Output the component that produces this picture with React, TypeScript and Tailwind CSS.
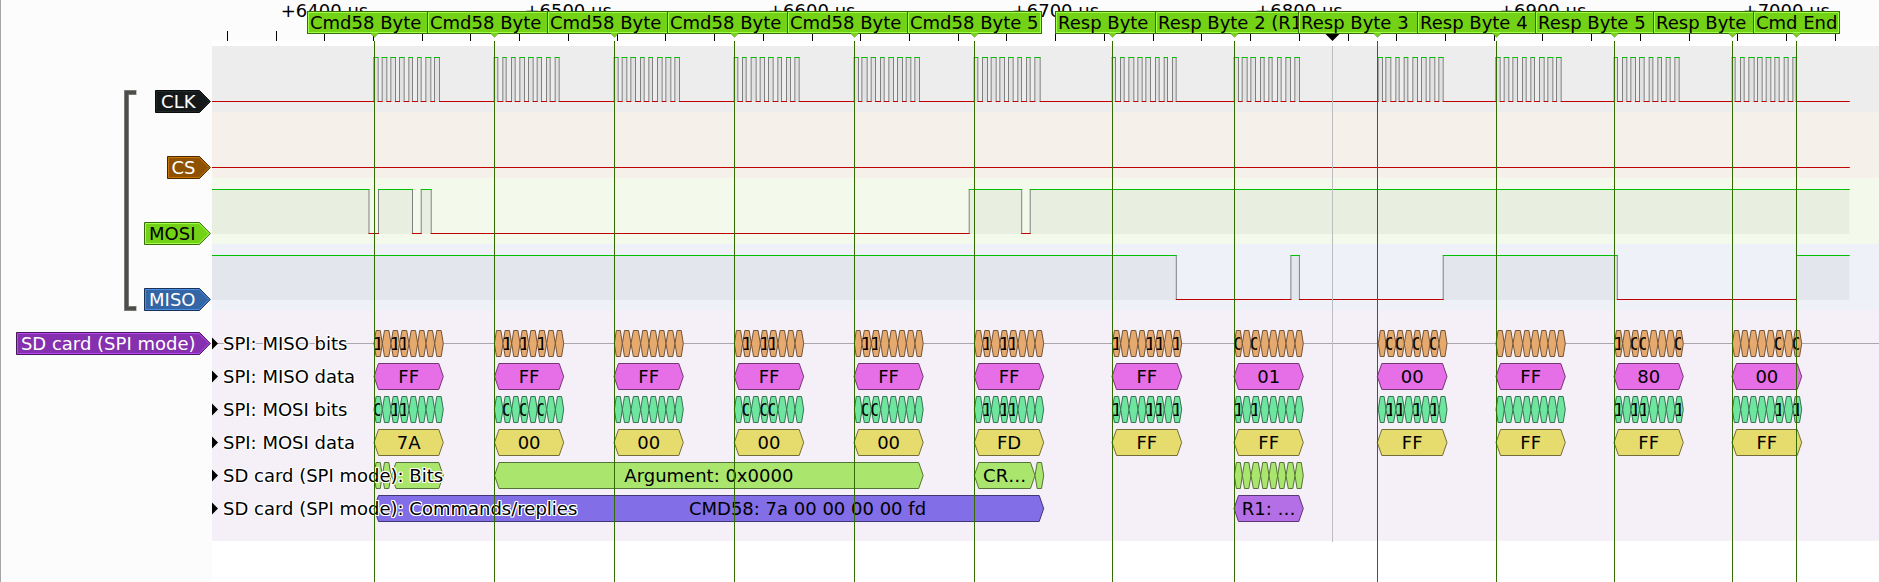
import React from "react";

const FONT = '"DejaVu Sans", Verdana, sans-serif';
const LEFT = 212;
const WIDTH = 1667;
const END = 1849.3;

/* ---------- captured data ---------- */

type ByteFrame = {
  origin: number;
  pulses: number[];
  start: number;
  end: number;
  miso: string;
  mosi: string;
  misoBits: string;
  mosiBits: string;
};

// Pulse edges are stored in thirds of a pixel, relative to the origin.
const BYTES: ByteFrame[] = [
  { origin: 0, pulses: [1120, 1136, 1145, 1162, 1171, 1188, 1197, 1214, 1225, 1239, 1251, 1265, 1276, 1294, 1302, 1320], start: 374, end: 443.3, miso: "FF", mosi: "7A", misoBits: "1 11    ", mosiBits: "0 11    " },
  { origin: 360, pulses: [401, 415, 427, 440, 453, 467, 478, 495, 504, 521, 530, 546, 558, 572, 584, 599], start: 494.5, end: 563.7, miso: "FF", mosi: "00", misoBits: " 1 1 1  ", mosiBits: " 0 0 0  " },
  { origin: 360, pulses: [761, 776, 785, 802, 811, 828, 840, 854, 865, 879, 891, 908, 916, 934, 943, 960], start: 614, end: 683.3, miso: "FF", mosi: "00", misoBits: "        ", mosiBits: "        " },
  { origin: 760, pulses: [-79, -65, -54, -40, -28, -10, -1, 15, 24, 41, 52, 66, 78, 93, 103, 119], start: 734.3, end: 803.7, miso: "FF", mosi: "00", misoBits: " 1 11   ", mosiBits: " 0 00   " },
  { origin: 760, pulses: [281, 297, 304, 323, 332, 348, 360, 374, 385, 402, 411, 429, 437, 454, 463, 480], start: 854, end: 923.2, miso: "FF", mosi: "00", misoBits: " 11     ", mosiBits: " 00     " },
  { origin: 760, pulses: [641, 655, 666, 684, 692, 710, 718, 735, 744, 761, 772, 786, 798, 812, 823, 842], start: 974.3, end: 1043.7, miso: "FF", mosi: "FD", misoBits: " 1 11   ", mosiBits: " 1 11   " },
  { origin: 1040, pulses: [215, 228, 240, 254, 265, 283, 292, 308, 316, 333, 345, 359, 371, 384, 396, 410], start: 1112, end: 1181.7, miso: "FF", mosi: "FF", misoBits: "1   11 1", mosiBits: "1   11 1" },
  { origin: 1040, pulses: [581, 597, 605, 623, 631, 648, 660, 674, 685, 698, 711, 725, 736, 753, 763, 780], start: 1234, end: 1303.3, miso: "01", mosi: "FF", misoBits: "0 0     ", mosiBits: "1 1     " },
  { origin: 1040, pulses: [1013, 1029, 1036, 1054, 1066, 1079, 1091, 1105, 1117, 1134, 1143, 1160, 1168, 1186, 1195, 1211], start: 1377.3, end: 1447, miso: "00", mosi: "FF", misoBits: " 00 0 0 ", mosiBits: " 11 1 1 " },
  { origin: 1440, pulses: [166, 182, 191, 208, 217, 234, 246, 260, 271, 285, 297, 314, 322, 340, 348, 365], start: 1496, end: 1565.3, miso: "FF", mosi: "FF", misoBits: "        ", mosiBits: "        " },
  { origin: 1440, pulses: [521, 534, 546, 562, 571, 588, 597, 614, 626, 640, 652, 666, 677, 692, 703, 719], start: 1614, end: 1683.3, miso: "80", mosi: "FF", misoBits: "1 00   0", mosiBits: "1 11   1" },
  { origin: 1440, pulses: [875, 887, 900, 914, 925, 944, 951, 968, 977, 994, 1003, 1019, 1031, 1046, 1057, 1070], start: 1732, end: 1801.7, miso: "00", mosi: "FF", misoBits: "     0 0", mosiBits: "     1 1" },
];

const CLK_EDGES = BYTES.flatMap((b) =>
  b.pulses.map((p, i) => b.origin + (i % 2 === 0 ? p + 1.5 : p - 1.5) / 3),
);
const MOSI_EDGES = [369, 378.5, 412.5, 421.2, 431.2, 969.2, 1021.7, 1030.2];
const MISO_EDGES = [1176.3, 1290.9, 1299.4, 1443.2, 1617.3, 1796.5];

const CURSORS = [374, 494, 614, 734, 854, 974, 1112, 1234, 1377, 1496, 1614, 1732, 1796];
const HOVER = 1332;

/* ---------- ruler ---------- */

const MARKER_GROUPS = [
  {
    gap: "ml-[95px]",
    flags: [
      { text: "Cmd58 Byte", w: "w-[120px]" },
      { text: "Cmd58 Byte", w: "w-[120px]" },
      { text: "Cmd58 Byte", w: "w-[120px]" },
      { text: "Cmd58 Byte", w: "w-[120px]" },
      { text: "Cmd58 Byte", w: "w-[120px]" },
      { text: "Cmd58 Byte 5", w: "w-[135px]" },
    ],
  },
  {
    gap: "ml-[13px]",
    flags: [
      { text: "Resp Byte", w: "w-[100px]" },
      { text: "Resp Byte 2 (R1", w: "w-[143px]" },
      { text: "Resp Byte 3", w: "w-[119px]" },
      { text: "Resp Byte 4", w: "w-[118px]" },
      { text: "Resp Byte 5", w: "w-[118px]" },
      { text: "Resp Byte", w: "w-[100px]" },
      { text: "Cmd End", w: "w-[87px]" },
    ],
  },
];

function Ruler() {
  const ticks = Array.from({ length: 34 }, (_, k) => Math.round(226.86 + 48.727 * k));
  const labels = Array.from({ length: 7 }, (_, k) => ({
    x: 324.5 + 243.63 * k,
    text: `+${6400 + k * 100} µs`,
  }));
  return (
    <div className="grid h-[41px] bg-[#fcfcfc]">
      <svg className="col-start-1 row-start-1" width={WIDTH} height={41} viewBox={`${LEFT} 0 ${WIDTH} 41`}>
        {ticks.map((x) => (
          <rect key={x} x={x} y={31} width={1} height={10} fill="#000" />
        ))}
        {labels.map((l) => (
          <text key={l.text} x={l.x} y={17} textAnchor="middle" fontSize={18}>
            {l.text}
          </text>
        ))}
      </svg>
      <div className="col-start-1 row-start-1 mt-[11px] flex h-[23px]">
        {MARKER_GROUPS.map((group, g) => (
          <div key={g} className={`flex ${group.gap}`}>
            {group.flags.map((f, i) => (
              <div
                key={i}
                className={`${f.w} h-[23px] shrink-0 overflow-hidden border-y border-l border-[#3a6b0b] bg-[#73d216] pl-[2px] leading-[21px] whitespace-pre ${
                  i === group.flags.length - 1
                    ? "border-r shadow-[inset_0_0_0_1px_#9dff47]"
                    : "shadow-[inset_1px_1px_0_0_#9dff47,inset_0_-1px_0_0_#9dff47]"
                }`}
              >
                {f.text}
              </div>
            ))}
          </div>
        ))}
      </div>
    </div>
  );
}

/* ---------- logic traces ---------- */

type TraceProps = { top: number; edges: number[]; startHigh?: boolean; bg: string };

function Trace({ top, edges, startHigh = false, bg }: TraceProps) {
  const hi = top + 11;
  const lo = top + 55;
  const points = [LEFT - 1, ...edges, END];
  const runs = points.slice(0, -1).map((x, i) => ({
    x1: x,
    x2: points[i + 1],
    high: (i % 2 === 0) === startHigh,
  }));
  return (
    <svg className={`block ${bg}`} width={WIDTH} height={66} viewBox={`${LEFT} ${top} ${WIDTH} 66`}>
      {runs
        .filter((r) => r.high)
        .map((r) => (
          <rect key={r.x1} x={r.x1} y={hi} width={r.x2 - r.x1} height={45} fill="#000" fillOpacity={0.045} />
        ))}
      {edges.map((x) => (
        <line key={x} x1={x} x2={x} y1={hi + 0.5} y2={lo + 0.5} stroke="#808080" />
      ))}
      {runs.map((r) => (
        <line
          key={r.x1}
          x1={r.x1 - 0.5}
          x2={r.x2 + 0.5}
          y1={(r.high ? hi : lo) + 0.5}
          y2={(r.high ? hi : lo) + 0.5}
          stroke={r.high ? "#00c000" : "#c00000"}
        />
      ))}
    </svg>
  );
}

/* ---------- decoder annotations ---------- */

type HexProps = {
  x1: number;
  x2: number;
  cy: number;
  fill: string;
  stroke: string;
  text?: string;
  textX?: number;
};

function Hex({ x1, x2, cy, fill, stroke, text, textX }: HexProps) {
  const w = x2 - x1;
  const s = Math.min(4.5, w / 4);
  const t = cy - 13;
  const b = cy + 13;
  return (
    <>
      <path
        d={`M${x1} ${cy}L${x1 + s} ${t}H${x2 - s}L${x2} ${cy}L${x2 - s} ${b}H${x1 + s}Z`}
        fill={fill}
        stroke={stroke}
      />
      {text && (
        <text x={textX ?? (x1 + x2) / 2} y={cy + 6.5} textAnchor="middle" fontSize={18}>
          {text}
        </text>
      )}
    </>
  );
}

function bitBounds(b: ByteFrame) {
  const starts = b.pulses.filter((_, i) => i % 2 === 0).map((p) => b.origin + (p + 2) / 3);
  return [...starts, b.end];
}

type BitsProps = { id: string; frame: ByteFrame; bits: string; cy: number; fill: string; stroke: string };

function Bits({ id, frame, bits, cy, fill, stroke }: BitsProps) {
  const bounds = bitBounds(frame);
  return (
    <>
      {bits.split("").map((bit, i) => {
        const x = bounds[i];
        const clip = `${id}-${i}`;
        return (
          <g key={i}>
            <Hex x1={x} x2={bounds[i + 1]} cy={cy} fill={fill} stroke={stroke} />
            {bit !== " " && (
              <>
                <clipPath id={clip}>
                  <rect x={x + 0.2} y={cy - 12} width={6} height={24} />
                </clipPath>
                <text x={x - 1.2} y={cy + 6.5} fontSize={18} clipPath={`url(#${clip})`}>
                  {bit}
                </text>
              </>
            )}
          </g>
        );
      })}
    </>
  );
}

const HALO =
  "[text-shadow:1px_0_#fff,-1px_0_#fff,0_1px_#fff,0_-1px_#fff,1px_1px_#fff,-1px_1px_#fff,1px_-1px_#fff,-1px_-1px_#fff]";

function DecoderRow({ label, cy, children }: { label: string; cy: number; children: React.ReactNode }) {
  return (
    <div className="grid h-[33px]">
      <svg
        className="col-start-1 row-start-1"
        width={WIDTH}
        height={33}
        viewBox={`${LEFT} ${cy - 16.5} ${WIDTH} 33`}
      >
        {children}
        <path d={`M${LEFT} ${cy - 6}L${LEFT + 6} ${cy}L${LEFT} ${cy + 6}Z`} fill="#000" />
      </svg>
      <span className={`z-[1] col-start-1 row-start-1 self-center pl-[11px] leading-[33px] whitespace-pre ${HALO}`}>
        {label}
      </span>
    </div>
  );
}

const ORANGE = { fill: "#e6a96e", stroke: "#735437" };
const PINK = { fill: "#e66ee6", stroke: "#733773" };
const MINT = { fill: "#6ee6a0", stroke: "#377350" };
const YELLOW = { fill: "#e6dc6e", stroke: "#736e37" };
const LIME = { fill: "#aae66e", stroke: "#557337" };
const INDIGO = { fill: "#826ee6", stroke: "#413773" };
const VIOLET = { fill: "#b46ee6", stroke: "#5a3773" };

function Decoder() {
  const first = bitBounds(BYTES[0]);
  return (
    <div className="flex h-[231px] flex-col bg-[#f5eff7] pt-[17px]">
      <DecoderRow label="SPI: MISO bits" cy={343.5}>
        <rect x={LEFT} y={343} width={WIDTH} height={1} fill="#aca7ad" />
        {BYTES.map((b, i) => (
          <Bits key={i} id={`miso-${i}`} frame={b} bits={b.misoBits} cy={343.5} {...ORANGE} />
        ))}
      </DecoderRow>
      <DecoderRow label="SPI: MISO data" cy={376.5}>
        {BYTES.map((b, i) => (
          <Hex key={i} x1={b.start} x2={b.end} cy={376.5} text={b.miso} {...PINK} />
        ))}
      </DecoderRow>
      <DecoderRow label="SPI: MOSI bits" cy={409.5}>
        {BYTES.map((b, i) => (
          <Bits key={i} id={`mosi-${i}`} frame={b} bits={b.mosiBits} cy={409.5} {...MINT} />
        ))}
      </DecoderRow>
      <DecoderRow label="SPI: MOSI data" cy={442.5}>
        {BYTES.map((b, i) => (
          <Hex key={i} x1={b.start} x2={b.end} cy={442.5} text={b.mosi} {...YELLOW} />
        ))}
      </DecoderRow>
      <DecoderRow label="SD card (SPI mode): Bits" cy={475.5}>
        <Hex x1={first[0]} x2={first[1]} cy={475.5} {...LIME} />
        <Hex x1={first[1]} x2={first[2]} cy={475.5} {...LIME} />
        <Hex x1={391.5} x2={443.3} cy={475.5} {...LIME} />
        <Hex x1={494.5} x2={923.2} cy={475.5} text="Argument: 0x0000" {...LIME} />
        <Hex x1={974.3} x2={1035} cy={475.5} text="CR…" {...LIME} />
        <Hex x1={1035} x2={1043.7} cy={475.5} {...LIME} />
        <Bits id="r1" frame={BYTES[7]} bits="        " cy={475.5} {...LIME} />
      </DecoderRow>
      <DecoderRow label="SD card (SPI mode): Commands/replies" cy={508.5}>
        <Hex x1={374} x2={1043.7} cy={508.5} text="CMD58: 7a 00 00 00 00 fd" textX={807.5} {...INDIGO} />
        <Hex x1={1234} x2={1303.3} cy={508.5} text="R1: …" {...VIOLET} />
      </DecoderRow>
    </div>
  );
}

/* ---------- channel tags ---------- */

type TagProps = { label: string; w: number; fill: string; dark: string; light: string; color: string };

function Tag({ label, w, fill, dark, light, color }: TagProps) {
  const body = w - 11.5;
  return (
    <div className="grid h-[23px] justify-end pr-px">
      <svg className="col-start-1 row-start-1 justify-self-end" width={w} height={23} viewBox={`0 0 ${w} 23`}>
        <path d={`M.5 .5H${body}L${w - 0.7} 11.5L${body} 22.5H.5Z`} fill={fill} stroke={dark} />
        <path d={`M1.5 1.5H${body - 0.5}L${w - 2} 11.5L${body - 0.5} 21.5H1.5Z`} fill="none" stroke={light} />
      </svg>
      <span className={`col-start-1 row-start-1 pr-[15.5px] text-right leading-[23px] whitespace-pre ${color}`}>
        {label}
      </span>
    </div>
  );
}

function Sidebar() {
  return (
    <aside className="flex h-[582px] w-[212px] shrink-0 flex-col border-l border-[#a5a5a5] bg-[#fcfcfc] pt-[90px]">
      <div className="flex h-[221px] justify-end gap-[7px]">
        <svg width={13} height={221} viewBox="0 0 13 221">
          <path d="M12.5 2.5H2.5V218.5H12.5" fill="none" stroke="#868884" strokeWidth={5} />
          <path d="M12 2.5H2.5V218.5H12" fill="none" stroke="#4c4e4a" strokeWidth={3.4} />
        </svg>
        <div className="flex w-[68px] flex-col gap-[43px]">
          <Tag label="CLK" w={56} fill="#16191a" dark="#0a0c0c" light="#20282a" color="text-white" />
          <Tag label="CS" w={44} fill="#8f5202" dark="#472900" light="#cb7403" color="text-white" />
          <Tag label="MOSI" w={67} fill="#73d216" dark="#3a6b0b" light="#9dff47" color="text-black" />
          <Tag label="MISO" w={67} fill="#3465a4" dark="#183154" light="#4a8ee6" color="text-white" />
        </div>
      </div>
      <div className="mt-[21px]">
        <Tag
          label="SD card (SPI mode)"
          w={195}
          fill="#8530ae"
          dark="#421857"
          light="#bb48f2"
          color="text-white"
        />
      </div>
    </aside>
  );
}

/* ---------- cursors ---------- */

function Cursors() {
  return (
    <svg
      className="pointer-events-none absolute inset-0 z-10"
      width={WIDTH}
      height={582}
      viewBox={`${LEFT} 0 ${WIDTH} 582`}
    >
      <rect x={HOVER} y={46} width={1} height={496} fill="#bdbcbf" />
      <path d={`M${HOVER - 6.5} 34H${HOVER + 7.5}L${HOVER + 0.5} 41Z`} fill="#000" />
      {CURSORS.map((x) => (
        <g key={x}>
          <rect x={x} y={41} width={1} height={541} fill="#336b00" />
          <path d={`M${x - 3.5} 33H${x + 4.5}L${x + 0.5} 37.3Z`} fill="#73d216" />
          <path d={`M${x - 3.5} 33.5L${x + 0.5} 37.3L${x + 4.5} 33.5`} fill="none" stroke="#3a6b0b" strokeOpacity={0.45} />
        </g>
      ))}
    </svg>
  );
}

export default function App() {
  return (
    <div
      className="flex h-[582px] w-[1879px] overflow-hidden bg-white text-[18px] text-black"
      style={{ fontFamily: FONT }}
    >
      <Sidebar />
      <main className="relative flex w-[1667px] flex-col">
        <Ruler />
        <div className="mt-[5px] flex flex-col">
          <Trace top={46} edges={CLK_EDGES} bg="bg-[#ededed]" />
          <Trace top={112} edges={[]} bg="bg-[#f6f0ea]" />
          <Trace top={178} edges={MOSI_EDGES} startHigh bg="bg-[#f4faeb]" />
          <Trace top={244} edges={MISO_EDGES} startHigh bg="bg-[#eef1f7]" />
          <Decoder />
        </div>
        <Cursors />
      </main>
    </div>
  );
}
